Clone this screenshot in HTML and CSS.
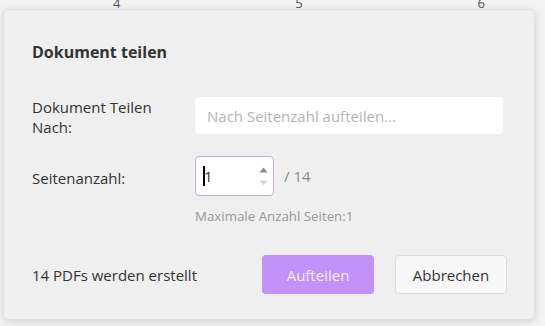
FILE: index.html
```html
<!DOCTYPE html>
<html lang="de">
<head>
<meta charset="utf-8">
<link rel="stylesheet" href="styles.css">
</head>
<body>
<div class="page">
  <div class="thumbs">
    <span class="num">4</span>
    <span class="num">5</span>
    <span class="num">6</span>
  </div>
</div>
<div class="dialog">
  <h1 class="title">Dokument teilen</h1>
  <div class="row row-split">
    <label class="label">Dokument Teilen Nach:</label>
    <div class="select">Nach Seitenzahl aufteilen...</div>
  </div>
  <div class="row row-count">
    <label class="label label-count">Seitenanzahl:</label>
    <div class="count">
      <div class="spin">
        <span class="value"><span class="caret"></span>1</span>
        <span class="arrows">
          <svg width="9" height="6" viewBox="0 0 9 6"><path d="M0.5 5.5 L4.5 0.5 L8.5 5.5 Z" fill="#8c8c8c"/></svg>
          <svg width="9" height="6" viewBox="0 0 9 6"><path d="M0.5 0.5 L4.5 5.5 L8.5 0.5 Z" fill="#d6d6d6"/></svg>
        </span>
      </div>
      <span class="total">/ 14</span>
    </div>
  </div>
  <div class="hint">Maximale Anzahl Seiten:1</div>
  <div class="footer">
    <span class="info">14 PDFs werden erstellt</span>
    <div class="buttons">
      <button class="btn btn-primary">Aufteilen</button>
      <button class="btn btn-secondary">Abbrechen</button>
    </div>
  </div>
</div>
</body>
</html>
```
FILE: styles.css
```css
* { box-sizing: border-box; }
html, body { margin: 0; padding: 0; }
body {
  width: 545px;
  height: 326px;
  background: #f3f3f3;
  font-family: "Open Sans", "Noto Sans", sans-serif;
  color: #333;
  overflow: hidden;
  position: relative;
}
.page { height: 326px; width: 545px; }
.thumbs {
  display: flex;
  justify-content: space-between;
  padding: 0 60px 0 113px;
  margin-top: -4px;
}
.num {
  font-size: 13px;
  color: #555;
  line-height: 14px;
}
.dialog {
  position: absolute;
  left: 3px;
  top: 9px;
  width: 532px;
  height: 311px;
  background: #efefef;
  border: 1px solid #e0e0e0;
  border-radius: 5px;
  box-shadow: 0 2px 8px rgba(0,0,0,0.12);
  padding: 31px 27px 0 28px;
}
.title {
  margin: 0;
  font-size: 16px;
  font-weight: 700;
  color: #333;
  line-height: 22px;
}
.row { display: flex; }
.label {
  flex: 0 0 163px;
  font-size: 15px;
  line-height: 20px;
  color: #333;
}
.row-split { margin-top: 34px; align-items: flex-start; }
.row-split .label { padding-right: 24px; }
.select {
  width: 308px;
  height: 37px;
  background: #fff;
  border-radius: 4px;
  font-size: 15px;
  color: #b5b5b5;
  padding-left: 12px;
  display: flex;
  align-items: center;
}
.row-count { margin-top: 19px; align-items: center; }
.label-count { padding-top: 3px; }
.count { display: flex; align-items: center; }
.spin {
  width: 79px;
  height: 40px;
  background: #fff;
  border: 1px solid #c9a7ef;
  border-radius: 4px;
  display: flex;
  align-items: center;
  justify-content: space-between;
  padding: 0 5px 0 7px;
}
.value {
  font-size: 15px;
  color: #333;
  display: flex;
  align-items: center;
}
.caret {
  display: inline-block;
  width: 2px;
  height: 20px;
  background: #000;
  margin-right: -1px;
}
.arrows {
  display: flex;
  flex-direction: column;
  gap: 7px;
}
.arrows svg { display: block; }
.total {
  margin-left: 10px;
  font-size: 15px;
  color: #8a8a8a;
}
.hint {
  margin-top: 11px;
  margin-left: 163px;
  font-size: 13.3px;
  color: #999;
  line-height: 18px;
}
.footer {
  margin-top: 30px;
  display: flex;
  align-items: center;
  justify-content: space-between;
}
.info { font-size: 15px; color: #333; }
.buttons { display: flex; gap: 21px; }
.btn {
  height: 39px;
  width: 112px;
  border-radius: 4px;
  font-family: inherit;
  font-size: 15px;
  padding: 0;
}
.btn-primary {
  background: #c292fa;
  border: none;
  color: #f7edff;
}
.btn-secondary {
  background: #f7f7f7;
  border: 1px solid #dcdcdc;
  color: #333;
}
```
